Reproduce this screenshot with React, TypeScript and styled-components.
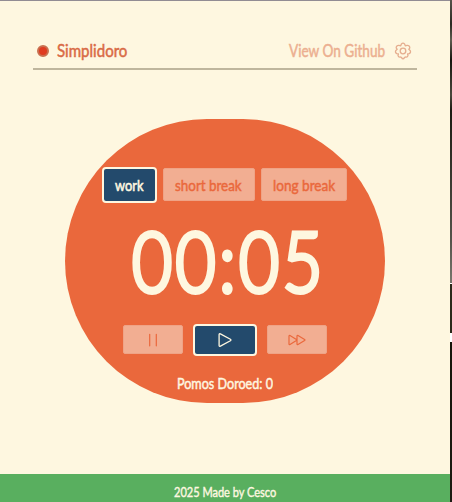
import React, { useLayoutEffect, useRef, useState } from "react";
import styled, { createGlobalStyle } from "styled-components";

const cream = "#fef7e0";
const orange = "#ea683c";
const navy = "#234a6c";
const peach = "#f2ae92";

const GlobalStyle = createGlobalStyle`
  * { box-sizing: border-box; }
  body { margin: 0; background: ${cream}; font-family: Lato, "Noto Sans", sans-serif; overflow: hidden; }
`;

const Screen = styled.div`
  display: flex;
  width: 452px;
  height: 502px;
`;

const Page = styled.div`
  display: flex;
  flex-direction: column;
  width: 450px;
  height: 502px;
  background: ${cream};
  border-top: 1px solid #928c93;
`;

/* Sliver of the desktop beside the window. */
const DesktopEdge = styled.div`
  width: 2px;
  background: linear-gradient(
    #55534a 0, #2b2a22 24px, #5f5d50 40px, #16150e 60px, #4a483c 95px, #1c1b12 110px,
    #55534a 240px, #77756a 280px, #77756a 283px, #fff 283px, #fff 284px, #2b2a1a 284px,
    #2b2a1a 333px, #fff 333px, #fff 342px, #16150a 342px, #1c1b12 100%
  );
`;

const Header = styled.header`
  display: flex;
  align-items: center;
  justify-content: space-between;
  height: 69px;
  margin: 0 33px;
  padding: 33px 5px 0 4px;
  border-bottom: 2px solid #bfb69d;
`;

const Group = styled.div<{ $gap: number }>`
  display: flex;
  align-items: center;
  gap: ${(p) => p.$gap}px;
`;

const Dot = styled.span`
  width: 12px;
  height: 12px;
  border-radius: 50%;
  background: #df3b20;
  border: 2px solid #c97050;
`;

const Main = styled.main`
  flex: 1;
  display: flex;
  flex-direction: column;
  align-items: center;
  padding-top: 48.5px;
`;

const Timer = styled.section`
  display: flex;
  flex-direction: column;
  align-items: center;
  width: 320px;
  height: 284px;
  padding-top: 47.5px;
  border-radius: 142px;
  background: ${orange};
`;

const ModeRow = styled.div`
  display: flex;
  align-items: center;
  gap: 6px;
  height: 37px;
  margin-right: 2px;
`;

const Button = styled.button<{ $width: number; $height: number; $active?: boolean }>`
  display: flex;
  align-items: center;
  justify-content: center;
  flex: none;
  width: ${(p) => p.$width}px;
  height: ${(p) => p.$height}px;
  padding: 0;
  font-family: inherit;
  color: ${(p) => (p.$active ? cream : orange)};
  background: ${(p) => (p.$active ? navy : peach)};
  border: ${(p) => (p.$active ? `2px solid ${cream}` : "1px solid #efa386")};
  border-radius: ${(p) => (p.$active ? 4 : 2)}px;
`;

const Clock = styled.div`
  display: flex;
  align-items: center;
  height: 120px;
  padding: 0 0 5px 7px;
  font-weight: 300;
  letter-spacing: 4px;
  color: ${cream};
`;

const Controls = styled.div`
  display: flex;
  align-items: center;
  gap: 10px;
  height: 33px;
`;

const Count = styled.div`
  margin-top: 17px;
  color: ${cream};
`;

const Footer = styled.footer`
  display: flex;
  justify-content: center;
  height: 28px;
  padding-top: 10px;
  background: #59af5f;
  color: ${cream};
`;

const FitBox = styled.span<{ $width: number; $size: number; $stroke: number; $color?: string }>`
  display: block;
  width: ${(p) => p.$width}px;
  height: ${(p) => p.$size * 1.2}px;
  font-size: ${(p) => p.$size}px;
  line-height: 1.2;
  white-space: nowrap;
  -webkit-text-stroke: ${(p) => p.$stroke}px currentColor;
  color: ${(p) => p.$color ?? "inherit"};
`;

const FitInner = styled.span`
  display: inline-block;
  transform-origin: 0 50%;
`;

type FitProps = { width: number; size: number; stroke?: number; color?: string; children: string };

/* Narrows a line of text so that it fills the given width. */
function Fit({ width, size, stroke = 0.5, color, children }: FitProps) {
  const ref = useRef<HTMLSpanElement>(null);
  const [scale, setScale] = useState(1);
  useLayoutEffect(() => {
    if (ref.current) setScale(width / ref.current.offsetWidth);
  }, [width, size, children]);
  return (
    <FitBox $width={width} $size={size} $stroke={stroke} $color={color}>
      <FitInner ref={ref} style={{ transform: `scaleX(${scale})` }}>{children}</FitInner>
    </FitBox>
  );
}

const Icon = styled.svg`
  display: block;
  fill: none;
  stroke: currentColor;
  stroke-linecap: round;
  stroke-linejoin: round;
`;

const GearIcon = styled(Icon)`
  color: #e5ad8e;
`;

export default function App() {
  return (
    <Screen>
      <GlobalStyle />
      <Page>
        <Header>
          <Group $gap={8}>
            <Dot />
            <Fit width={70} size={17} color="#d96a45">Simplidoro</Fit>
          </Group>
          <Group $gap={9}>
            <Fit width={96} size={17} color="#ecaf90">View On Github</Fit>
            <GearIcon width="18" height="18" viewBox="0 0 18 18" strokeWidth="1.3">
              <path d="M7.3 2.2Q9 .1 10.7 2.2L11.3 3.8 13 3.4Q15.8 3.2 15.8 5.8L14.8 7.3 16.1 8.4Q17.3 10.4 15.2 11.6L13.6 12 14 13.6Q13.5 15.5 11.5 15L10.6 15.4Q9 18.4 7.4 15.4L6.5 15Q4.5 15.5 4 13.6L4.4 12 2.8 11.6Q.7 10.4 1.9 8.4L3.2 7.3 2.2 5.8Q2.2 3.2 5 3.4L6.7 3.8Z" />
              <circle cx="9" cy="9" r="2.8" />
            </GearIcon>
          </Group>
        </Header>
        <Main>
          <Timer>
            <ModeRow>
              <Button $width={55} $height={36} $active>
                <Fit width={28} size={16} stroke={0.6}>work</Fit>
              </Button>
              <Button $width={92} $height={33}>
                <Fit width={67} size={16}>short break</Fit>
              </Button>
              <Button $width={86} $height={33}>
                <Fit width={62} size={16}>long break</Fit>
              </Button>
            </ModeRow>
            <Clock>
              <Fit width={194} size={82} stroke={5}>00:05</Fit>
            </Clock>
            <Controls>
              <Button $width={60} $height={29}>
                <Icon width="12" height="16" viewBox="0 0 12 16" strokeWidth="1.2">
                  <path d="M2.7 2.3v11.5M9.3 2.3v11.5" />
                </Icon>
              </Button>
              <Button $width={64} $height={32} $active>
                <Icon width="16" height="16" viewBox="0 0 16 16" strokeWidth="1.3">
                  <path d="M2.1 2.6Q2.1 1.3 3.4 1.9L13.4 7.3Q14.4 8 13.4 8.7L3.4 14.1Q2.1 14.7 2.1 13.4Z" />
                </Icon>
              </Button>
              <Button $width={60} $height={29}>
                <Icon width="20" height="14" viewBox="0 0 20 14" strokeWidth="1.2">
                  <path d="M2 3.1Q2 2 3 2.5L9.4 6.4Q10 7 9.4 7.6L3 11.5Q2 12 2 10.9ZM10 3.1Q10 2 11 2.5L17.6 6.4Q18.4 7 17.6 7.6L11 11.5Q10 12 10 10.9Z" />
                </Icon>
              </Button>
            </Controls>
            <Count>
              <Fit width={96} size={16}>Pomos Doroed: 0</Fit>
            </Count>
          </Timer>
        </Main>
        <Footer>
          <Fit width={102} size={13.5} stroke={0.4}>2025 Made by Cesco</Fit>
        </Footer>
      </Page>
      <DesktopEdge />
    </Screen>
  );
}
